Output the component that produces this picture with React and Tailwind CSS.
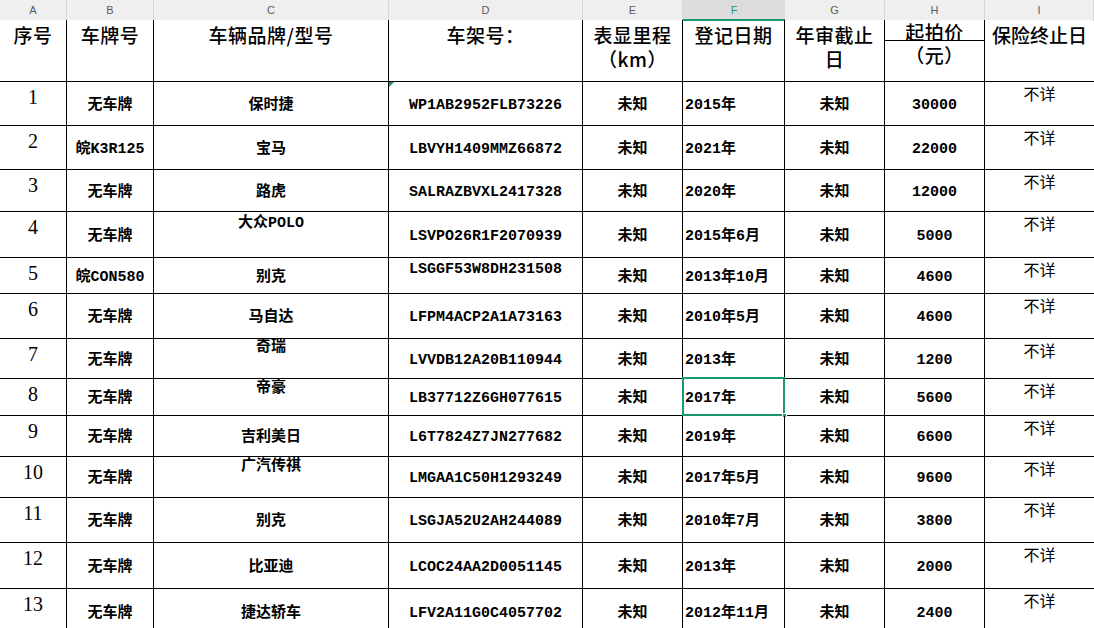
import React from 'react';

const COLS = 'grid grid-cols-[67px_87px_235px_194px_100px_102px_100px_100px_109px]';
const BODY = "font-['Liberation_Mono','Noto_Sans_CJK_SC',monospace] font-bold text-[15px] leading-[15px] text-black";
const HEAD = "font-['Noto_Sans_CJK_SC',sans-serif] font-medium text-[19px] leading-[24px] tracking-[0.5px] text-black";

const letters = ['A', 'B', 'C', 'D', 'E', 'F', 'G', 'H', 'I'];

// c: pt class for the brand column when top-aligned, d: same for VIN column
const rows = [
    { h: 'h-[44px]', n: '1', plate: '无车牌', brand: '保时捷', vin: 'WP1AB2952FLB73226', date: '2015年', price: '30000', mark: true },
    { h: 'h-[44px]', n: '2', plate: '皖K3R125', brand: '宝马', vin: 'LBVYH1409MMZ66872', date: '2021年', price: '22000' },
    { h: 'h-[42px]', n: '3', plate: '无车牌', brand: '路虎', vin: 'SALRAZBVXL2417328', date: '2020年', price: '12000' },
    { h: 'h-[46px]', n: '4', plate: '无车牌', brand: '大众POLO', vin: 'LSVPO26R1F2070939', date: '2015年6月', price: '5000', c: 'pt-[4px]' },
    { h: 'h-[36px]', n: '5', plate: '皖CON580', brand: '别克', vin: 'LSGGF53W8DH231508', date: '2013年10月', price: '4600', d: 'pt-[4px]' },
    { h: 'h-[45px]', n: '6', plate: '无车牌', brand: '马自达', vin: 'LFPM4ACP2A1A73163', date: '2010年5月', price: '4600' },
    { h: 'h-[40px]', n: '7', plate: '无车牌', brand: '奇瑞', vin: 'LVVDB12A20B110944', date: '2013年', price: '1200', c: 'pt-[1px]' },
    { h: 'h-[37px]', n: '8', plate: '无车牌', brand: '帝豪', vin: 'LB37712Z6GH077615', date: '2017年', price: '5600', c: 'pt-[2px]', sel: true },
    { h: 'h-[41px]', n: '9', plate: '无车牌', brand: '吉利美日', vin: 'L6T7824Z7JN277682', date: '2019年', price: '6600' },
    { h: 'h-[41px]', n: '10', plate: '无车牌', brand: '广汽传祺', vin: 'LMGAA1C50H1293249', date: '2017年5月', price: '9600', c: 'pt-[2px]' },
    { h: 'h-[45px]', n: '11', plate: '无车牌', brand: '别克', vin: 'LSGJA52U2AH244089', date: '2010年7月', price: '3800' },
    { h: 'h-[46px]', n: '12', plate: '无车牌', brand: '比亚迪', vin: 'LCOC24AA2D0051145', date: '2013年', price: '2000' },
    { h: 'h-[46px]', n: '13', plate: '无车牌', brand: '捷达轿车', vin: 'LFV2A11G0C4057702', date: '2012年11月', price: '2400' },
];

const mid = 'flex items-center justify-center pt-[3px] border-r border-black';
const top = 'flex items-start justify-center border-r border-black';

const Row = ({ r }) => (
    <div className={`${COLS} ${r.h} border-b border-black`}>
        <div className="flex items-start justify-center pt-[5px] border-r border-black font-['Liberation_Serif',serif] text-[20px] leading-[20px] text-black">
            {r.n}
        </div>
        <div className={`${mid} ${BODY}`}>{r.plate}</div>
        <div className={`${r.c ? `${top} ${r.c}` : mid} ${BODY}`}>{r.brand}</div>
        <div className={`relative ${r.d ? `${top} ${r.d}` : mid} ${BODY}`}>
            {r.mark && (
                <span className="absolute top-0 left-0 w-0 h-0 border-t-[5px] border-r-[5px] border-t-[#1f8f4e] border-r-transparent" />
            )}
            {r.vin}
        </div>
        <div className={`${mid} ${BODY}`}>未知</div>
        <div className={`relative flex items-center justify-start pl-[2px] pt-[3px] border-r border-black ${BODY}`}>
            {r.date}
            {r.sel && (
                <span className="absolute left-[-1px] right-[-1px] top-[-2px] bottom-[-1px] border-2 border-[#1a9a6a]">
                    <span className="absolute right-[-4px] bottom-[-4px] w-[5px] h-[5px] bg-[#1a9a6a] border border-white" />
                </span>
            )}
        </div>
        <div className={`${mid} ${BODY}`}>未知</div>
        <div className={`${mid} ${BODY}`}>{r.price}</div>
        <div className="flex items-start justify-center pt-[3px] font-['Noto_Sans_CJK_SC',sans-serif] text-[16px] leading-[16px] text-black">
            不详
        </div>
    </div>
);

export default function App() {
    return (
        <div className="w-[1094px] h-[628px] overflow-hidden bg-white">
            {/* column letters */}
            <div className={`${COLS} h-[20px] bg-[#efefef] font-['Liberation_Sans',sans-serif] text-[11px]`}>
                {letters.map((l) => (
                    <div
                        key={l}
                        className={
                            l === 'F'
                                ? 'flex items-center justify-center bg-[#dcdcdc] border-b-2 border-[#1a9a6a] text-[#1a9a6a] pt-[2px]'
                                : 'flex items-center justify-center border-r border-[#d6d6d6] text-[#5b5b5b]'
                        }
                    >
                        {l}
                    </div>
                ))}
            </div>

            {/* header row */}
            <div className={`${COLS} h-[62px] border-b border-black ${HEAD}`}>
                <div className="text-center pt-[3px] border-r border-black">序号</div>
                <div className="text-center pt-[3px] border-r border-black">车牌号</div>
                <div className="text-center pt-[3px] border-r border-black">车辆品牌/型号</div>
                <div className="text-center pt-[3px] border-r border-black">车架号：</div>
                <div className="text-center pt-[3px] border-r border-black">
                    表显里程
                    <br />
                    （km）
                </div>
                <div className="text-center pt-[3px] border-r border-black">登记日期</div>
                <div className="text-center pt-[3px] border-r border-black">
                    年审截止
                    <br />
                    日
                </div>
                <div className="flex flex-col border-r border-black">
                    <div className="h-[21px] overflow-hidden border-b border-black text-center">起拍价</div>
                    <div className="text-center pt-[2px]">（元）</div>
                </div>
                <div className="text-center pt-[3px] tracking-normal">保险终止日</div>
            </div>

            {rows.map((r) => (
                <Row key={r.n} r={r} />
            ))}
        </div>
    );
}
